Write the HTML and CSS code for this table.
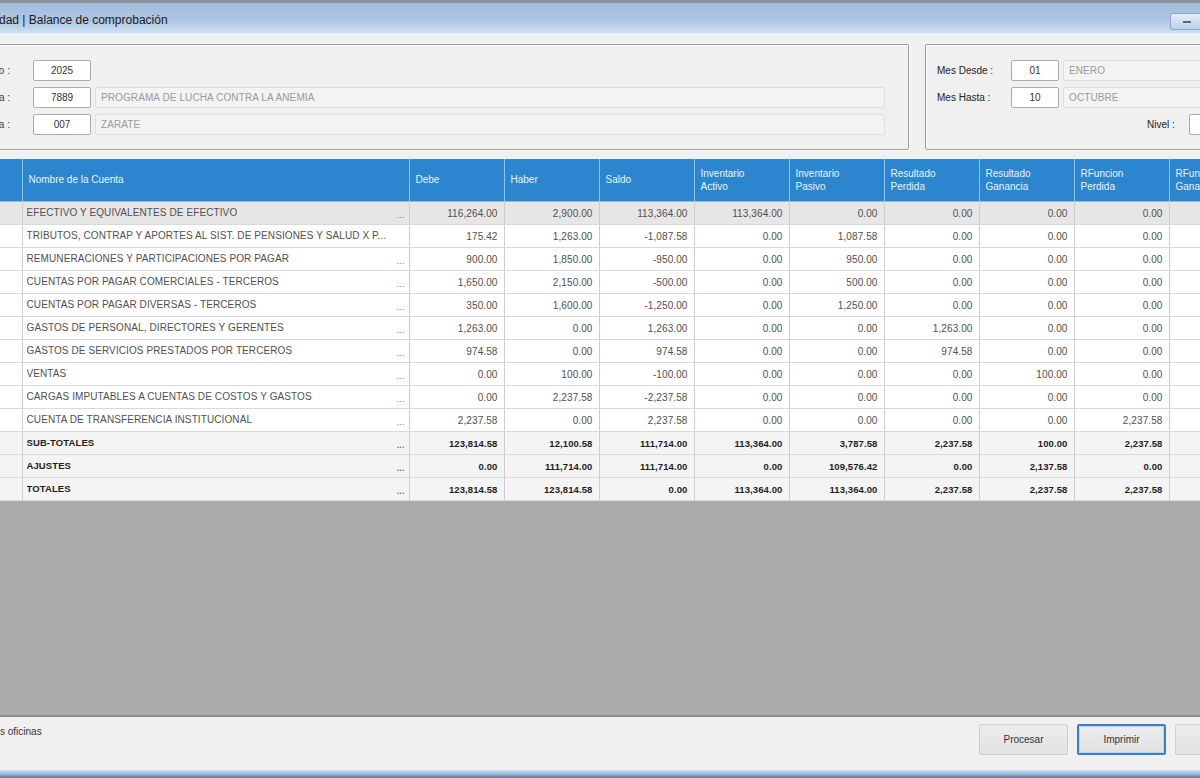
FILE: index.html
```html
<!DOCTYPE html>
<html lang="es">
<head>
<meta charset="utf-8">
<title>Balance de comprobación</title>
<link rel="stylesheet" href="styles.css">
</head>
<body>
<div class="window">
  <div class="titlebar">
    <span class="title">dad | Balance de comprobación</span>
    <span class="winbtn"><svg width="12" height="6" viewBox="0 0 12 6"><rect x="2" y="2" width="8" height="2" fill="#5a6b80"/></svg></span>
  </div>

  <div class="filters">
    <div class="group group-left">
      <div class="frow">
        <span class="lbl">Año :</span>
        <span class="inp">2025</span>
      </div>
      <div class="frow">
        <span class="lbl">Programa :</span>
        <span class="inp">7889</span>
        <span class="desc">PROGRAMA DE LUCHA CONTRA LA ANEMIA</span>
      </div>
      <div class="frow">
        <span class="lbl">Oficina :</span>
        <span class="inp">007</span>
        <span class="desc">ZARATE</span>
      </div>
    </div>
    <div class="group group-right">
      <div class="frow">
        <span class="lbl2">Mes Desde :</span>
        <span class="inp inp-s">01</span>
        <span class="desc desc-r">ENERO</span>
      </div>
      <div class="frow">
        <span class="lbl2">Mes Hasta :</span>
        <span class="inp inp-s">10</span>
        <span class="desc desc-r">OCTUBRE</span>
      </div>
      <div class="frow frow-end">
        <span class="lbl3">Nivel :</span>
        <span class="inp inp-n"></span>
      </div>
    </div>
  </div>

  <div class="grid">
    <table class="tbl">
      <colgroup>
        <col class="c-rh"><col class="c-name">
        <col class="c-num"><col class="c-num"><col class="c-num"><col class="c-num"><col class="c-num"><col class="c-num"><col class="c-num"><col class="c-num"><col class="c-num">
      </colgroup>
      <thead>
        <tr>
          <th></th>
          <th>Nombre de la Cuenta</th>
          <th>Debe</th>
          <th>Haber</th>
          <th>Saldo</th>
          <th>Inventario<br>Activo</th>
          <th>Inventario<br>Pasivo</th>
          <th>Resultado<br>Perdida</th>
          <th>Resultado<br>Ganancia</th>
          <th>RFuncion<br>Perdida</th>
          <th>RFuncion<br>Ganancia</th>
        </tr>
      </thead>
      <tbody>
        <tr class="sel"><td></td><td class="name"><span class="nt">EFECTIVO Y EQUIVALENTES DE EFECTIVO</span><span class="dots">...</span></td><td>116,264.00</td><td>2,900.00</td><td>113,364.00</td><td>113,364.00</td><td>0.00</td><td>0.00</td><td>0.00</td><td>0.00</td><td>0.00</td></tr>
        <tr><td></td><td class="name"><span class="nt">TRIBUTOS, CONTRAP Y APORTES AL SIST. DE PENSIONES Y SALUD X P...</span></td><td>175.42</td><td>1,263.00</td><td>-1,087.58</td><td>0.00</td><td>1,087.58</td><td>0.00</td><td>0.00</td><td>0.00</td><td>0.00</td></tr>
        <tr><td></td><td class="name"><span class="nt">REMUNERACIONES Y PARTICIPACIONES POR PAGAR</span><span class="dots">...</span></td><td>900.00</td><td>1,850.00</td><td>-950.00</td><td>0.00</td><td>950.00</td><td>0.00</td><td>0.00</td><td>0.00</td><td>0.00</td></tr>
        <tr><td></td><td class="name"><span class="nt">CUENTAS POR PAGAR COMERCIALES - TERCEROS</span><span class="dots">...</span></td><td>1,650.00</td><td>2,150.00</td><td>-500.00</td><td>0.00</td><td>500.00</td><td>0.00</td><td>0.00</td><td>0.00</td><td>0.00</td></tr>
        <tr><td></td><td class="name"><span class="nt">CUENTAS POR PAGAR DIVERSAS - TERCEROS</span><span class="dots">...</span></td><td>350.00</td><td>1,600.00</td><td>-1,250.00</td><td>0.00</td><td>1,250.00</td><td>0.00</td><td>0.00</td><td>0.00</td><td>0.00</td></tr>
        <tr><td></td><td class="name"><span class="nt">GASTOS DE PERSONAL, DIRECTORES Y GERENTES</span><span class="dots">...</span></td><td>1,263.00</td><td>0.00</td><td>1,263.00</td><td>0.00</td><td>0.00</td><td>1,263.00</td><td>0.00</td><td>0.00</td><td>0.00</td></tr>
        <tr><td></td><td class="name"><span class="nt">GASTOS DE SERVICIOS PRESTADOS POR TERCEROS</span><span class="dots">...</span></td><td>974.58</td><td>0.00</td><td>974.58</td><td>0.00</td><td>0.00</td><td>974.58</td><td>0.00</td><td>0.00</td><td>0.00</td></tr>
        <tr><td></td><td class="name"><span class="nt">VENTAS</span><span class="dots">...</span></td><td>0.00</td><td>100.00</td><td>-100.00</td><td>0.00</td><td>0.00</td><td>0.00</td><td>100.00</td><td>0.00</td><td>0.00</td></tr>
        <tr><td></td><td class="name"><span class="nt">CARGAS IMPUTABLES A CUENTAS DE COSTOS Y GASTOS</span><span class="dots">...</span></td><td>0.00</td><td>2,237.58</td><td>-2,237.58</td><td>0.00</td><td>0.00</td><td>0.00</td><td>0.00</td><td>0.00</td><td>0.00</td></tr>
        <tr><td></td><td class="name"><span class="nt">CUENTA DE TRANSFERENCIA INSTITUCIONAL</span><span class="dots">...</span></td><td>2,237.58</td><td>0.00</td><td>2,237.58</td><td>0.00</td><td>0.00</td><td>0.00</td><td>0.00</td><td>2,237.58</td><td>0.00</td></tr>
        <tr class="tot"><td></td><td class="name"><span class="nt">SUB-TOTALES</span><span class="dots">...</span></td><td>123,814.58</td><td>12,100.58</td><td>111,714.00</td><td>113,364.00</td><td>3,787.58</td><td>2,237.58</td><td>100.00</td><td>2,237.58</td><td>0.00</td></tr>
        <tr class="tot"><td></td><td class="name"><span class="nt">AJUSTES</span><span class="dots">...</span></td><td>0.00</td><td>111,714.00</td><td>111,714.00</td><td>0.00</td><td>109,576.42</td><td>0.00</td><td>2,137.58</td><td>0.00</td><td>0.00</td></tr>
        <tr class="tot"><td></td><td class="name"><span class="nt">TOTALES</span><span class="dots">...</span></td><td>123,814.58</td><td>123,814.58</td><td>0.00</td><td>113,364.00</td><td>113,364.00</td><td>2,237.58</td><td>2,237.58</td><td>2,237.58</td><td>0.00</td></tr>
      </tbody>
    </table>
  </div>

  <div class="statusbar">
    <span class="status-text">s oficinas</span>
    <div class="buttons">
      <span class="btn">Procesar</span>
      <span class="btn btn-focus">Imprimir</span>
      <span class="btn btn-cut">Salir</span>
    </div>
  </div>
  <div class="bottomedge"></div>
</div>
</body>
</html>
```

FILE: styles.css
```css
html, body {
  margin: 0;
  padding: 0;
}
body {
  width: 1200px;
  height: 778px;
  overflow: hidden;
  background: #f0f0f0;
  font-family: "Liberation Sans", Arial, sans-serif;
  font-size: 10px;
  color: #333;
}
.window {
  width: 1200px;
  height: 778px;
  display: flex;
  flex-direction: column;
  overflow: hidden;
}

/* Title bar */
.titlebar {
  height: 31px;
  flex: none;
  border-top: 3px solid #8c9099;
  background: linear-gradient(#a3bedd, #abc5e2 55%, #c3d7ed 85%, #dce7f4);
  display: flex;
  align-items: center;
  border-bottom: 1px solid #f7f9fc;
}
.title {
  font-size: 12px;
  color: #1c1c1c;
  margin-left: -1px;
  margin-top: 3px;
}
.winbtn {
  margin-left: auto;
  margin-right: -12px;
  width: 42px;
  height: 17px;
  margin-top: 6px;
  border: 1px solid #8ea7c6;
  border-radius: 3px;
  background: linear-gradient(#e3edf8, #bcd1e9);
  display: flex;
  align-items: center;
  padding-left: 10px;
  box-sizing: border-box;
}

/* Filters */
.filters {
  flex: none;
  height: 123px;
  box-sizing: border-box;
  padding-top: 9px;
  display: flex;
}
.group {
  flex: none;
  height: 106px;
  box-sizing: border-box;
  border: 1px solid #9b9b9b;
  box-shadow: inset 1px 1px 0 #ffffff, 1px 1px 0 #ffffff;
  border-radius: 2px;
  padding-top: 15px;
  display: flex;
  flex-direction: column;
  gap: 6px;
}
.group-left {
  margin-left: -30px;
  width: 939px;
}
.group-right {
  margin-left: 16px;
  width: 300px;
  padding-left: 11px;
}
.frow {
  display: flex;
  align-items: center;
  height: 21px;
}
.frow-end {
  padding-left: 210px;
}
.lbl {
  width: 39px;
  display: flex;
  justify-content: flex-end;
  margin-right: 23px;
  white-space: nowrap;
  color: #444;
  flex: none;
}
.lbl2 {
  width: 74px;
  white-space: nowrap;
  color: #222;
  flex: none;
}
.lbl3 {
  width: 42px;
  white-space: nowrap;
  color: #222;
  flex: none;
}
.inp {
  width: 58px;
  height: 21px;
  box-sizing: border-box;
  border: 1px solid #a9abb1;
  border-radius: 2px;
  background: #ffffff;
  display: flex;
  align-items: center;
  justify-content: center;
  color: #333;
  flex: none;
}
.inp-s {
  width: 48px;
}
.inp-n {
  width: 40px;
}
.desc {
  margin-left: 4px;
  width: 790px;
  height: 21px;
  box-sizing: border-box;
  border: 1px solid #dedede;
  border-radius: 2px;
  background: #f3f3f3;
  display: flex;
  align-items: center;
  padding-left: 5px;
  color: #9a9a9a;
  letter-spacing: 0.1px;
  flex: none;
}
.desc-r {
  width: 160px;
}

/* Grid */
.grid {
  flex: 1;
  background: #ababab;
  overflow: hidden;
  border-top: 1px solid #fafafa;
}
.tbl {
  table-layout: fixed;
  border-collapse: collapse;
  width: 1264px;
}
.c-rh { width: 22px; }
.c-name { width: 387px; }
.c-num { width: 95px; }
.tbl th {
  height: 42px;
  box-sizing: border-box;
  background: #2b86cf;
  color: #eaf3fc;
  font-weight: normal;
  font-size: 10px;
  text-align: left;
  vertical-align: middle;
  padding: 0 6px;
  line-height: 13px;
  border-right: 1px solid #8fc2ec;
  border-bottom: 1px solid #9fb8cc;
  white-space: nowrap;
  overflow: hidden;
}
.tbl td {
  height: 23px;
  box-sizing: border-box;
  background: #ffffff;
  color: #505050;
  text-align: right;
  padding: 2px 6px 0 4px;
  border-right: 1px solid #cdcdcd;
  border-bottom: 1px solid #d9d9d9;
  white-space: nowrap;
  overflow: hidden;
  letter-spacing: 0.1px;
}
.tbl td.name {
  text-align: left;
  padding-left: 4px;
  padding-right: 4px;
}
.name .nt {
  display: inline-block;
  max-width: 377px;
  overflow: hidden;
}
.dots {
  float: right;
  color: #777;
  font-size: 9px;
  margin-top: 3px;
}
.tbl tr.sel td {
  background: #e6e6e6;
}
.tbl tr.tot td {
  background: #f4f4f4;
  color: #1e1e1e;
  font-weight: bold;
  font-size: 9.5px;
}

/* Status bar */
.statusbar {
  flex: none;
  height: 55px;
  box-sizing: border-box;
  border-top: 2px solid #8e8e8e;
  background: #f0f0f0;
  display: flex;
  justify-content: space-between;
  align-items: flex-start;
}
.status-text {
  margin-top: 9px;
  color: #333;
}
.buttons {
  display: flex;
  gap: 9px;
  margin-top: 7px;
  margin-right: -64px;
}
.btn {
  width: 89px;
  height: 31px;
  box-sizing: border-box;
  border: 1px solid #cfcfcf;
  border-radius: 2px;
  background: linear-gradient(#ececec, #e2e2e2);
  display: flex;
  align-items: center;
  justify-content: center;
  color: #333;
}
.btn-focus {
  border: 2px solid #3b80c0;
  box-shadow: inset 0 0 0 1px #b9d6ef;
}
.btn-cut {
  color: #e8e8e8;
}
.bottomedge {
  flex: none;
  height: 8px;
  background: linear-gradient(#d0e0f1, #a8c3dd 40%, #4f7f9f);
}
```
